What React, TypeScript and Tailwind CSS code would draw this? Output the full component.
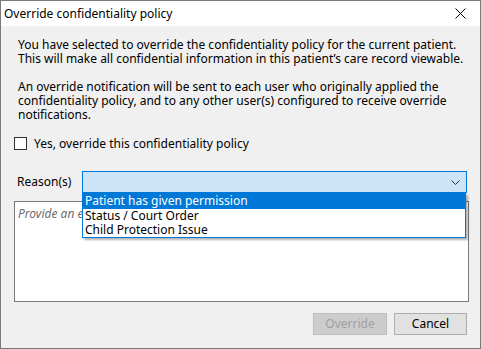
import { useState } from 'react';

const reasons = ['Patient has given permission', 'Status / Court Order', 'Child Protection Issue'];

function CloseIcon() {
  return (
    <svg width="11" height="11" viewBox="0 0 11 11" fill="none" stroke="#000" strokeWidth="1">
      <path d="M0.5 0.5L10.5 10.5M10.5 0.5L0.5 10.5" />
    </svg>
  );
}

function Chevron() {
  return (
    <svg width="9" height="5" viewBox="0 0 9 5" fill="none" stroke="#333" strokeWidth="1">
      <path d="M0.5 0.5L4.5 4.5L8.5 0.5" />
    </svg>
  );
}

export default function App() {
  const [checked, setChecked] = useState(false);
  const [selected] = useState(0);

  return (
    <div
      className="w-[481px] h-[349px] flex flex-col border border-[#7a7a7a] bg-[#f0f0f0] text-[12px] text-black overflow-hidden"
      style={{ fontFamily: '"Noto Sans", "Liberation Sans", Arial, sans-serif' }}
    >
      {/* Title bar */}
      <div className="h-[25px] bg-white flex items-center justify-between pl-[3px] pr-[14px] shrink-0">
        <span className="text-[12px]">Override confidentiality policy</span>
        <CloseIcon />
      </div>

      {/* Body */}
      <div className="flex-1 flex flex-col pt-[12px] px-[13px] pb-[13px]">
        <div className="pl-[4px] leading-[14px]">
          <p>
            You have selected to override the confidentiality policy for the current patient.
            <br />
            This will make all confidential information in this patient’s care record viewable.
          </p>
          <p className="mt-[14px] pr-[10px]">
            An override notification will be sent to each user who originally applied the
            confidentiality policy, and to any other user(s) configured to receive override
            notifications.
          </p>
        </div>

        <label className="flex items-center mt-[15px] h-[13px]">
          <input type="checkbox" checked={checked} onChange={() => setChecked(!checked)} className="sr-only" />
          <span className="w-[13px] h-[13px] border border-[#333] bg-white shrink-0" />
          <span className="ml-[7px]">Yes, override this confidentiality policy</span>
        </label>

        <div className="flex items-center mt-[21px] h-[22px]">
          <span className="w-[68px] pl-[3px]">Reason(s)</span>
          <div className="relative w-[385px]">
            <div className="h-[22px] border border-[#0078d7] bg-[#cce4f7] flex items-center justify-end pr-[6px]">
              <Chevron />
            </div>
            <ul className="absolute left-0 top-full w-[384px] bg-white border border-[#0078d7] shadow-[2px_2px_2px_rgba(0,0,0,0.3)] z-10 leading-[14px]">
              {reasons.map((r, i) => (
                <li
                  key={r}
                  className={
                    i === selected
                      ? 'h-[15px] pl-[2px] bg-[#0078d7] text-white'
                      : 'h-[14px] pl-[2px] text-black'
                  }
                >
                  {r}
                </li>
              ))}
            </ul>
          </div>
        </div>

        <div className="mt-[8px] h-[101px] w-[455px] border border-[#7a7a7a] bg-white px-[3px] pt-[3px]">
          <span className="italic text-[#6d6d6d]">Provide an explanation</span>
        </div>

        <div className="flex justify-end gap-[7px] mt-[11px] pr-[0px]">
          <button className="w-[74px] h-[22px] border border-[#bfbfbf] bg-[#cccccc] text-[#a0a0a0]" disabled>
            Override
          </button>
          <button className="w-[73px] h-[22px] border border-[#adadad] bg-[#e1e1e1] text-black">
            Cancel
          </button>
        </div>
      </div>
    </div>
  );
}
